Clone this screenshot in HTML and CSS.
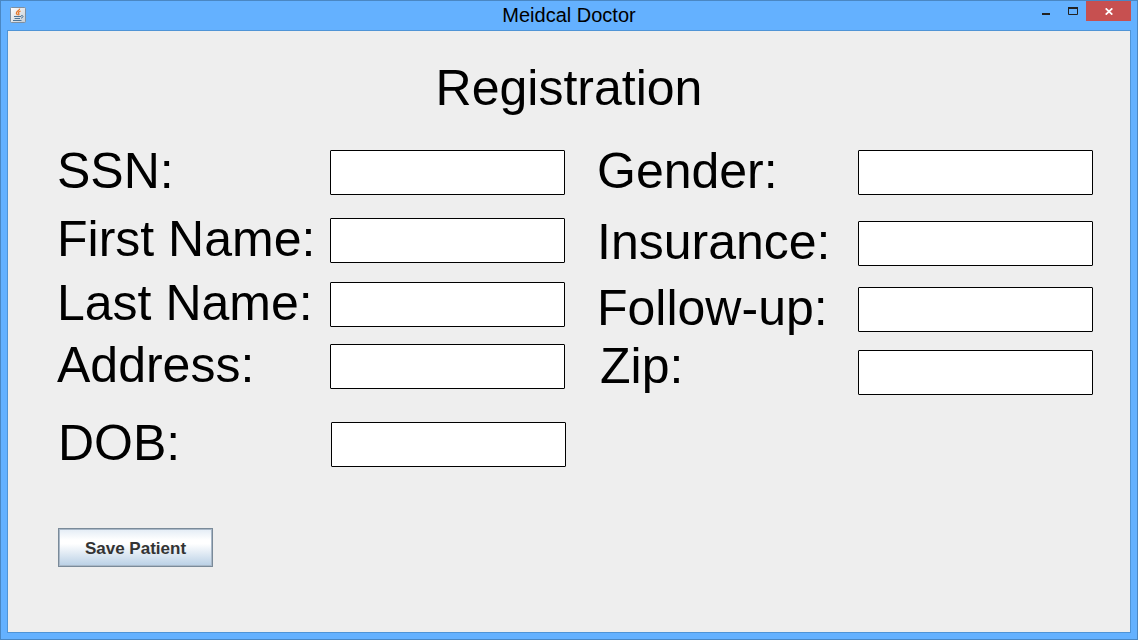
FILE: index.html
```html
<!DOCTYPE html>
<html lang="en">
<head>
<meta charset="utf-8">
<title>Meidcal Doctor</title>
<link rel="stylesheet" href="styles.css">
</head>
<body>
<div class="window">
  <header class="titlebar">
    <div class="titlebar-side">
      <svg class="app-icon" width="16" height="16" viewBox="0 0 16 16" aria-hidden="true">
        <defs>
          <linearGradient id="tile" x1="0" y1="0" x2="1" y2="1">
            <stop offset="0" stop-color="#ffffff"/>
            <stop offset="1" stop-color="#c4ccd4"/>
          </linearGradient>
        </defs>
        <rect x="0.5" y="0.5" width="15" height="15" rx="1" fill="url(#tile)" stroke="#7f8f9f"/>
        <path d="M9.6 1.6C10 3.4 6.2 4.2 6.4 6.2C6.5 7 7.4 7.4 7.5 8.2M10.6 4C8.6 4.8 8 5.6 8.8 6.6C9.2 7.2 8.8 7.8 8.4 8.2" fill="none" stroke="#e8782a" stroke-width="1.3"/>
        <path d="M4 9.5H11M4.6 11.5H10M3 13.5H11.5" fill="none" stroke="#4f7596" stroke-width="1.2"/>
        <path d="M11 8.8C13.8 7.8 13.8 10.6 11 11.2" fill="none" stroke="#4f7596"/>
      </svg>
    </div>
    <div class="title">Meidcal Doctor</div>
    <div class="titlebar-side controls">
      <button class="control minimize" type="button" aria-label="Minimize">
        <svg width="8" height="2" viewBox="0 0 8 2"><path d="M0 1H8" stroke="#222" stroke-width="2"/></svg>
      </button>
      <button class="control maximize" type="button" aria-label="Maximize">
        <svg width="10" height="8" viewBox="0 0 10 8"><path d="M0 1H10" stroke="#222" stroke-width="2"/><path d="M0.5 1V7.5H9.5V1" fill="none" stroke="#222"/></svg>
      </button>
      <button class="control close" type="button" aria-label="Close">
        <svg width="8" height="7" viewBox="0 0 8 7"><path d="M0.7 0.4L7.3 6.6M7.3 0.4L0.7 6.6" stroke="#fff" stroke-width="1.8"/></svg>
      </button>
    </div>
  </header>
  <main class="content">
    <h1 class="heading">Registration</h1>
    <form class="form">
      <div class="columns">
        <div class="column">
          <div class="row"><label class="label" for="ssn">SSN:</label><input class="field" id="ssn" type="text"></div>
          <div class="row first-name"><label class="label" for="first">First Name:</label><input class="field" id="first" type="text"></div>
          <div class="row last-name"><label class="label" for="last">Last Name:</label><input class="field" id="last" type="text"></div>
          <div class="row address"><label class="label" for="address">Address:</label><input class="field" id="address" type="text"></div>
          <div class="row dob"><label class="label" for="dob">DOB:</label><input class="field" id="dob" type="text"></div>
        </div>
        <div class="column column-right">
          <div class="row"><label class="label" for="gender">Gender:</label><input class="field" id="gender" type="text"></div>
          <div class="row insurance"><label class="label" for="insurance">Insurance:</label><input class="field" id="insurance" type="text"></div>
          <div class="row follow-up"><label class="label" for="follow">Follow-up:</label><input class="field" id="follow" type="text"></div>
          <div class="row zip"><label class="label" for="zip">Zip:</label><input class="field" id="zip" type="text"></div>
        </div>
      </div>
      <button class="save" type="button">Save Patient</button>
    </form>
  </main>
</div>
</body>
</html>
```
FILE: styles.css
```css
* {
  box-sizing: border-box;
}

body {
  margin: 0;
  font-family: "Liberation Sans", Arial, sans-serif;
  color: #000;
}

.window {
  display: flex;
  flex-direction: column;
  min-height: 100vh;
  padding: 0 6px 6px;
  border: 1px solid #4a87c3;
  background: #64b1ff;
}

.titlebar {
  display: grid;
  grid-template-columns: 1fr auto 1fr;
  height: 29px;
}

.titlebar-side {
  display: flex;
  align-items: flex-start;
}

.app-icon {
  margin: 6px 0 0 3px;
}

.title {
  font-size: 20px;
  line-height: 28px;
}

.controls {
  justify-content: flex-end;
}

.control {
  display: flex;
  justify-content: center;
  width: 27px;
  height: 20px;
  padding: 0;
  border: 0;
  background: none;
}

.minimize {
  padding-top: 12px;
}

.maximize {
  padding-top: 6px;
}

.close {
  align-items: center;
  width: 45px;
  background: #c75050;
}

.content {
  flex: 1;
  padding: 29px 37px 40px 49px;
  border: 1px solid #4f94d6;
  background: #eee;
}

.heading {
  margin: 0;
  padding-right: 12px;
  font-size: 50px;
  font-weight: 400;
  line-height: 56px;
  text-align: center;
}

.columns {
  display: grid;
  grid-template-columns: minmax(0, 508fr) minmax(0, 496fr);
  column-gap: 32px;
  padding-top: 34px;
}

.row {
  display: flex;
  align-items: flex-start;
}

.label {
  flex: 0 0 273px;
  font-size: 50px;
  line-height: 42px;
  white-space: nowrap;
}

.column-right .label {
  flex-basis: 261px;
}

.field {
  flex: 1;
  min-width: 0;
  height: 45px;
  padding: 0 8px;
  border: 1px solid #000;
  border-radius: 1px;
  background: #fff;
  font: 28px "Liberation Sans", Arial, sans-serif;
}

.first-name {
  margin-top: 23px;
}

.last-name {
  margin-top: 19px;
}

.address {
  margin-top: 17px;
}

.dob {
  margin-top: 33px;
  padding-left: 1px;
}

.dob .field {
  margin-right: -1px;
}

.insurance {
  margin-top: 26px;
}

.follow-up {
  margin-top: 21px;
}

.zip {
  height: 50px;
  margin-top: 13px;
}

.zip .label {
  padding-left: 3px;
}

.zip .field {
  align-self: flex-end;
}

.save {
  display: block;
  width: 155px;
  height: 39px;
  margin-top: 61px;
  margin-left: 1px;
  padding: 2px 0 0;
  border: 1px solid #7a8a99;
  box-shadow: inset 0 0 0 1px #a9b8c8;
  background: linear-gradient(#e3ecf5, #fff 30%, #fff 40%, #b8cfe5);
  color: #333;
  font: bold 17px "Liberation Sans", Arial, sans-serif;
}
```
